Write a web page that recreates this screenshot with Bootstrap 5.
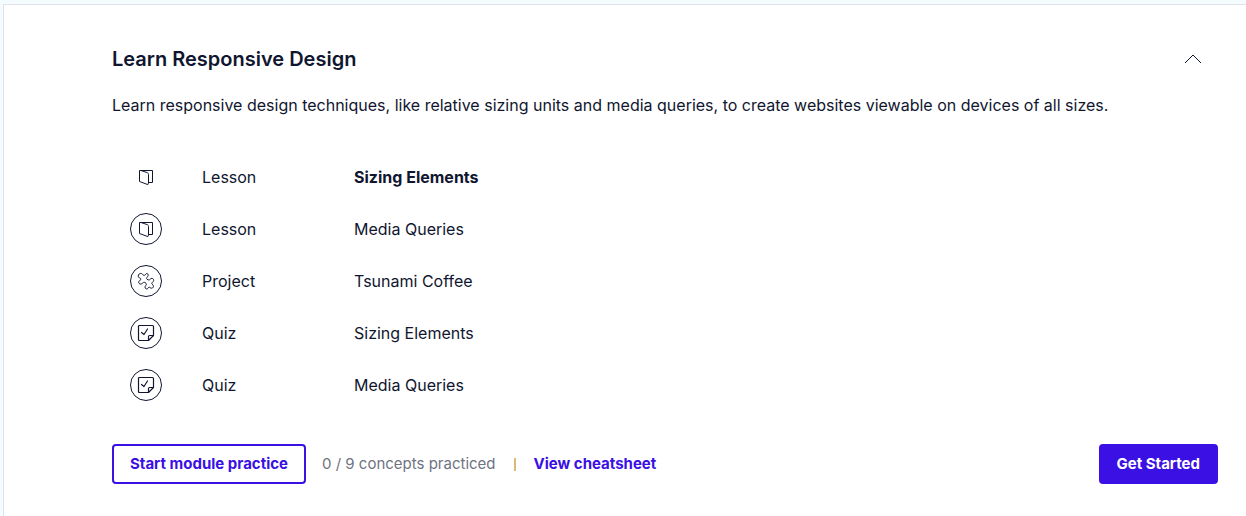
<!DOCTYPE html>
<html lang="en">
<head>
<meta charset="utf-8">
<meta name="viewport" content="width=device-width, initial-scale=1">
<title>Learn Responsive Design</title>
<link rel="stylesheet" href="https://cdn.jsdelivr.net/npm/bootstrap@5.3.0/dist/css/bootstrap.min.css">
<style>
  :root { --navy: #10162f; --hyper: #3a10e5; }
  body {
    background: #f5fcff;
    color: var(--navy);
    font-family: Inter, "Noto Sans", sans-serif;
    font-size: 16px;
    line-height: 24px;
  }
  .module-panel {
    min-height: calc(100vh - 4px);
    margin: 4px 0 0 3px;
    padding: 40px 28px 32px 108px;
    background: #fff;
    border: solid #dde3e9;
    border-width: 1px 0 0 1px;
  }
  .module-title { font-size: 20px; line-height: 28px; font-weight: 600; }
  .module-toggle { width: 50px; height: 28px; color: var(--navy); }
  .task-list { margin-top: 34px; }
  .task-row { height: 52px; padding-left: 18px; }
  .task-icon { width: 32px; height: 32px; }
  .task-ring { border: 1px solid var(--navy); border-radius: 50%; }
  .task-kind { width: 152px; margin-left: 40px; }
  .task-link { color: var(--navy); }
  .module-actions { margin-top: 33px; }
  .module-btn {
    height: 40px;
    padding: 0 16px;
    border: 2px solid var(--hyper);
    border-radius: 4px;
    font-size: 15px;
    font-weight: 700;
    line-height: 24px;
    white-space: nowrap;
  }
  .btn-hollow, .btn-hollow:hover { color: var(--hyper); background: #fff; border-color: var(--hyper); }
  .btn-solid, .btn-solid:hover { color: #fff; background: var(--hyper); border-color: var(--hyper); }
  .practice-info { gap: 18px; color: #6f7382; font-size: 15px; }
  .practice-rule { width: 2px; height: 13px; background: #d9b97c; }
  .strong-link { font-weight: 700; }
  .sheet-link { color: var(--hyper); }
</style>
</head>
<body>
<svg class="d-none" aria-hidden="true">
  <symbol id="lesson" viewBox="0 0 16 16" fill="none" stroke="currentColor" stroke-linejoin="round">
    <path d="M1.500 1.500V12.500L9 15.300Q10.500 15.700 10.500 14.500V5.500Q10.500 4.200 9.500 3.700L3 1.500H14.500V13.500H10.500M1.500 1.500H3"/>
  </symbol>
  <symbol id="project" viewBox="0 0 18 18" fill="none" stroke="currentColor" stroke-linejoin="round">
    <path d="M1.200 4.200C1 2.500 3 1 4.500 1.500C6 2 6 3.800 7.500 3.300C8.800 2.900 8.800 1.300 10 1.500C11.300 1.700 11.500 3.500 10.700 4.500C9.800 5.700 9 6.300 10 7.200C11.300 8.300 12.500 8.200 13.200 7.200C14 6 15.800 6 16.500 7.500C17.200 9 15.700 10 15 10.800C14.300 11.600 15.500 12.300 16.200 13.500C16.800 14.700 16 16.300 14.500 16.200C13.200 16.100 12.500 14.700 11.500 15.500C10.700 16.200 11 17 9.700 17C8.300 17 7.600 15.400 8.300 14.200C9 13.100 10 12.500 9 11.300C8 10.200 6.500 10 5.700 11C4.700 12.300 3 12.500 2 11.300C1.200 10 2 8.800 3.200 8.200C4.500 7.500 4 6.500 2.800 6C2 5.700 1.300 5.200 1.200 4.200Z"/>
  </symbol>
  <symbol id="quiz" viewBox="0 0 18 18" fill="none" stroke="currentColor" stroke-width="1.200" stroke-linejoin="round" stroke-linecap="round">
    <path d="M2.500 1.500H15.500Q16.500 1.500 16.500 2.500V11.500L11.500 16.500H2.500Q1.500 16.500 1.500 15.500V2.500Q1.500 1.500 2.500 1.500ZM11.500 16.500V12.500Q11.500 11.500 12.500 11.500H16.500M4.500 8.500L7 10.500L10.500 5"/>
  </symbol>
</svg>

<main class="module-panel">
  <header class="d-flex justify-content-between align-items-center">
    <h1 class="module-title mb-0">Learn Responsive Design</h1>
    <button class="module-toggle btn p-0 border-0 d-flex align-items-center justify-content-center" type="button" aria-label="Collapse module" aria-expanded="true">
      <svg width="18" height="10" viewBox="0 0 18 10" fill="none" stroke="currentColor"><path d="M1 9L9 1L17 9"/></svg>
    </button>
  </header>
  <p class="mt-3 pt-1 mb-0">Learn responsive design techniques, like relative sizing units and media queries, to create websites viewable on devices of all sizes.</p>

  <ul class="task-list list-unstyled mb-0">
    <li class="task-row d-flex align-items-center">
      <span class="task-icon d-flex align-items-center justify-content-center"><svg width="16" height="16"><use href="#lesson"/></svg></span>
      <span class="task-kind">Lesson</span><a class="task-link strong-link text-decoration-none" href="#">Sizing Elements</a>
    </li>
    <li class="task-row d-flex align-items-center">
      <span class="task-icon task-ring d-flex align-items-center justify-content-center"><svg width="16" height="16"><use href="#lesson"/></svg></span>
      <span class="task-kind">Lesson</span><a class="task-link text-decoration-none" href="#">Media Queries</a>
    </li>
    <li class="task-row d-flex align-items-center">
      <span class="task-icon task-ring d-flex align-items-center justify-content-center"><svg width="18" height="18"><use href="#project"/></svg></span>
      <span class="task-kind">Project</span><a class="task-link text-decoration-none" href="#">Tsunami Coffee</a>
    </li>
    <li class="task-row d-flex align-items-center">
      <span class="task-icon task-ring d-flex align-items-center justify-content-center"><svg width="18" height="18"><use href="#quiz"/></svg></span>
      <span class="task-kind">Quiz</span><a class="task-link text-decoration-none" href="#">Sizing Elements</a>
    </li>
    <li class="task-row d-flex align-items-center">
      <span class="task-icon task-ring d-flex align-items-center justify-content-center"><svg width="18" height="18"><use href="#quiz"/></svg></span>
      <span class="task-kind">Quiz</span><a class="task-link text-decoration-none" href="#">Media Queries</a>
    </li>
  </ul>

  <footer class="module-actions d-flex align-items-center justify-content-between">
    <div class="d-flex align-items-center gap-3">
      <button class="btn module-btn btn-hollow" type="button">Start module practice</button>
      <div class="practice-info d-flex align-items-center">
        <span>0 / 9 concepts practiced</span>
        <span class="practice-rule"></span>
        <a class="sheet-link strong-link text-decoration-none" href="#">View cheatsheet</a>
      </div>
    </div>
    <button class="btn module-btn btn-solid" type="button">Get Started</button>
  </footer>
</main>
<script src="https://cdn.jsdelivr.net/npm/bootstrap@5.3.0/dist/js/bootstrap.bundle.min.js"></script>
</body>
</html>
